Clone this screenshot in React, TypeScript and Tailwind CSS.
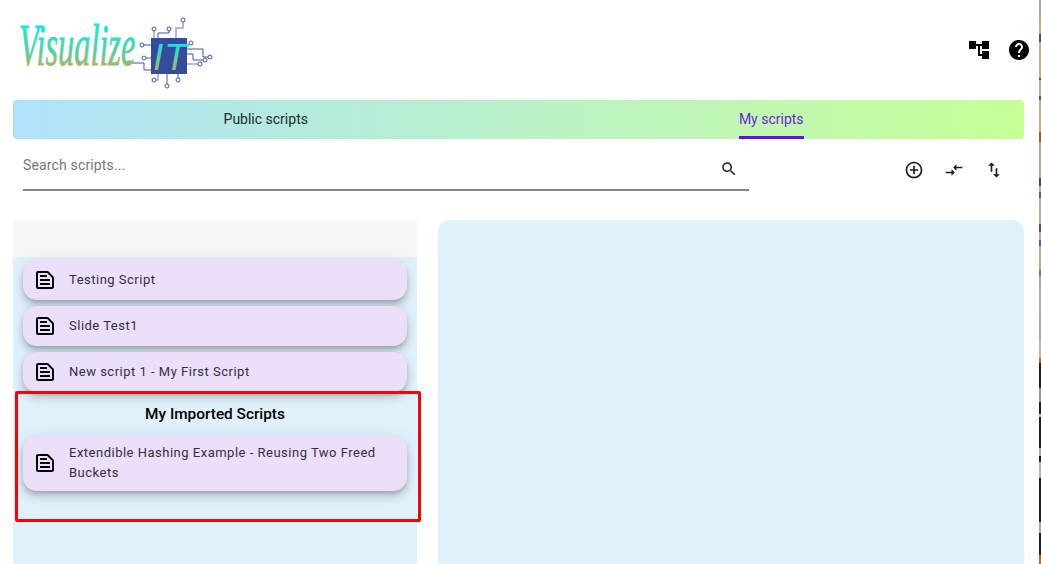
import React from "react";

const P = {
  tree: "M22 11V3h-7v3H9V3H2v8h7V8h2v10h4v3h7v-8h-7v3h-2V8h2v3z",
  help: "M12 2C6.48 2 2 6.48 2 12s4.48 10 10 10 10-4.48 10-10S17.52 2 12 2zm1 17h-2v-2h2v2zm2.07-7.75l-.9.92C13.45 12.9 13 13.5 13 15h-2v-.5c0-1.1.45-2.1 1.17-2.83l1.24-1.26c.37-.36.59-.86.59-1.41 0-1.1-.9-2-2-2s-2 .9-2 2H8c0-2.21 1.79-4 4-4s4 1.79 4 4c0 .88-.36 1.68-.93 2.25z",
  add: "M13 7h-2v4H7v2h4v4h2v-4h4v-2h-4V7zm-1-5C6.48 2 2 6.48 2 12s4.48 10 10 10 10-4.48 10-10S17.52 2 12 2zm0 18c-4.41 0-8-3.59-8-8s3.59-8 8-8 8 3.59 8 8-3.59 8-8 8z",
  compare: "M9.01 14H2v2h7.01v3L13 15l-3.99-4v3zm5.98-1v-3H22V8h-7.01V5L11 9l3.99 4z",
  swap: "M16 17.01V10h-2v7.01h-3L15 21l4-3.99h-3zM9 3L5 6.99h3V14h2V6.99h3L9 3z",
  search: "M15.5 14h-.79l-.28-.27C15.41 12.59 16 11.11 16 9.5 16 5.91 13.09 3 9.5 3S3 5.91 3 9.5 5.91 16 9.5 16c1.61 0 3.09-.59 4.23-1.57l.27.28v.79l5 4.99L20.49 19l-4.99-5zm-6 0C7.01 14 5 11.99 5 9.5S7.01 5 9.5 5 14 7.01 14 9.5 11.99 14 9.5 14z",
  doc: "M14.17 5 19 9.83V19H5V5h9.17m0-2H5c-1.1 0-2 .9-2 2v14c0 1.1.9 2 2 2h14c1.1 0 2-.9 2-2V9.83c0-.53-.21-1.04-.59-1.41l-4.83-4.83c-.37-.38-.88-.59-1.41-.59zM7 15h10v2H7v-2zm0-4h10v2H7v-2zm0-4h7v2H7V7z",
};

function Icon({ d, size = 24 }: { d: string; size?: number }) {
  return (
    <svg width={size} height={size} viewBox="0 0 24 24" fill="currentColor" className="shrink-0">
      <path d={d} />
    </svg>
  );
}

function Logo() {
  const dark = [
    "M169 31V33H158V38", "M144 45H151", "M146 58H151", "M131 63H144V70H151",
    "M187 45H189", "M187 49H203V57H208", "M187 54H193V60H203", "M167 74V84", "M178 74V78",
  ];
  const light = ["M183 22V28H176V38", "M154 31V38", "M187 64H198", "M158 74V80H156"];
  const dots: [number, number][] = [
    [183, 20], [169, 29], [154, 29], [142, 45], [144, 58], [129, 63], [191, 43],
    [210, 57], [205, 60], [200, 64], [154, 80], [167, 86], [178, 80],
  ];
  return (
    <svg width="200" height="90" viewBox="17 5 200 90" className="block">
      <defs>
        <linearGradient id="vis" gradientUnits="userSpaceOnUse" x1="0" y1="-45" x2="0" y2="12">
          <stop offset="0" stopColor="#00f0e8" />
          <stop offset="0.55" stopColor="#56cfa2" />
          <stop offset="0.8" stopColor="#a3b96c" />
          <stop offset="1" stopColor="#f0862c" />
        </linearGradient>
        <linearGradient id="it" gradientUnits="userSpaceOnUse" x1="0" y1="43" x2="0" y2="70">
          <stop offset="0" stopColor="#0ceadf" />
          <stop offset="1" stopColor="#a8b860" />
        </linearGradient>
      </defs>
      {dark.map((d, i) => <path key={i} d={d} fill="none" stroke="#3f56ad" strokeWidth="1" />)}
      {light.map((d, i) => <path key={i} d={d} fill="none" stroke="#98a5d6" strokeWidth="1.5" />)}
      {dots.map(([x, y], i) => (
        <circle key={i} cx={x} cy={y} r="2" fill="#fff" stroke="#4358ae" strokeWidth="1" />
      ))}
      <rect x="151" y="38" width="36" height="36" fill="#344ba0" />
      <text transform="translate(19 65) scale(0.54 1)" x="0" y="0" fontFamily="'Liberation Serif', serif" fontStyle="italic" fontSize="60" fill="url(#vis)" stroke="url(#vis)" strokeWidth="0.8">Visualize</text>
      <text x="153" y="70" fontFamily="'Liberation Sans', sans-serif" fontStyle="italic" fontSize="37" fill="url(#it)" letterSpacing="1">IT</text>
    </svg>
  );
}

function Strip() {
  const seg: [number, number, string][] = [
    [0, 18, "#a9a9a6"], [18, 16, "#c4ab7c"], [34, 8, "#46506a"], [42, 36, "#c2ae88"], [78, 2, "#59534a"],
    [80, 16, "#b9ac90"], [96, 4, "#5a5470"], [100, 32, "#c2ae88"], [132, 10, "#8f5a34"], [142, 36, "#b8ab90"],
    [178, 8, "#3e4a78"], [186, 6, "#b5ad98"], [192, 6, "#4e5c88"], [198, 26, "#b5ad98"], [224, 8, "#5c4a5e"],
    [232, 8, "#b5ad98"], [240, 6, "#3f6aa0"], [246, 24, "#b5ad98"], [270, 6, "#8e7a40"], [276, 10, "#a9a9a6"],
    [286, 30, "#a8b0ae"], [316, 24, "#b0ab98"], [340, 18, "#b8b8b8"], [358, 5, "#c8641a"], [363, 25, "#202020"],
    [388, 14, "#9a9a9a"], [402, 12, "#202020"], [414, 3, "#bdbdbd"], [417, 31, "#202020"], [448, 8, "#a8a8a8"],
    [456, 6, "#202020"], [462, 16, "#b0b0b0"], [478, 44, "#202020"], [522, 11, "#a8a8a8"], [533, 22, "#202020"], [555, 9, "#c8641a"],
  ];
  return (
    <svg width="2" height="564" className="block shrink-0">
      {seg.map(([y, h, c], i) => <rect key={i} x="0" y={y} width="2" height={h} fill={c} />)}
    </svg>
  );
}

function Item({ title, tall }: { title: string; tall?: boolean }) {
  return (
    <div className={`flex items-center rounded-[14px] bg-[#ecdff9] pl-[10px] pr-[24px] shadow-[0_3px_5px_-1px_rgba(0,0,0,0.2),0_6px_10px_0_rgba(0,0,0,0.14),0_1px_18px_0_rgba(0,0,0,0.06)] ${tall ? "h-[56px]" : "h-[40px]"}`}>
      <span className="text-black"><Icon d={P.doc} /></span>
      <span className="ml-[12px] text-[13px] leading-[20px] tracking-[0.5px] text-[#33303c]">{title}</span>
    </div>
  );
}

export default function App() {
  return (
    <div className="relative flex h-[564px] w-[1041px] overflow-hidden bg-white font-['Roboto',sans-serif]">
      <div className="w-[1039px] pl-[13px] pr-[15px]">
        <header className="flex h-[100px] items-center justify-between pl-[4px]">
          <Logo />
          <div className="mr-[-7px] mt-[-1px] flex items-center gap-[16px] text-black">
            <Icon d={P.tree} />
            <Icon d={P.help} />
          </div>
        </header>

        <nav className="flex h-[39px] rounded-[4px] bg-[linear-gradient(90deg,#aee3fb,#c6ff96)] text-[14px] text-[#1f2a2a]">
          <div className="flex flex-1 justify-center">
            <span className="flex h-full items-center">Public scripts</span>
          </div>
          <div className="flex flex-1 justify-center">
            <span className="flex h-full items-center border-b-[3px] border-[#6a0bea] pt-[3px] text-[#6a1fe0]">My scripts</span>
          </div>
        </nav>

        <div className="flex h-[81px]">
          <div className="ml-[10px] flex h-[52px] w-[726px] items-center justify-between border-b-2 border-[#858585] pr-[11px]">
            <span className="mt-[2px] text-[14px] tracking-[0.15px] text-[#777777]">Search scripts...</span>
            <span className="mt-[10px] text-[#222]"><Icon d={P.search} size={18} /></span>
          </div>
          <div className="ml-[155px] flex h-[62px] items-center gap-[20px] text-[#1c1c1c]">
            <Icon d={P.add} size={20} />
            <Icon d={P.compare} size={20} />
            <Icon d={P.swap} size={20} />
          </div>
        </div>

        <main className="flex h-[344px] gap-[21px]">
          <section className="w-[404px] bg-[#e0f1fc]">
            <div className="h-[37px] bg-[#f6f6f6]" />
            <div className="flex flex-col gap-[6px] px-[10px] pt-[3px]">
              <Item title="Testing Script" />
              <Item title="Slide Test1" />
              <Item title="New script 1 - My First Script" />
            </div>
            <h2 className="mt-[11px] text-center text-[15.36px] font-medium leading-[22px] text-black">My Imported Scripts</h2>
            <div className="mt-[10px] px-[10px]">
              <Item title="Extendible Hashing Example - Reusing Two Freed Buckets" tall />
            </div>
          </section>
          <section className="w-[586px] rounded-t-[12px] bg-[#e0f1fc]" />
        </main>
      </div>

      <Strip />

      <div className="absolute left-[15px] top-[391px] h-[130.5px] w-[405.5px] rounded-[2px] border-[3px] border-[#ff0000]" />
    </div>
  );
}
